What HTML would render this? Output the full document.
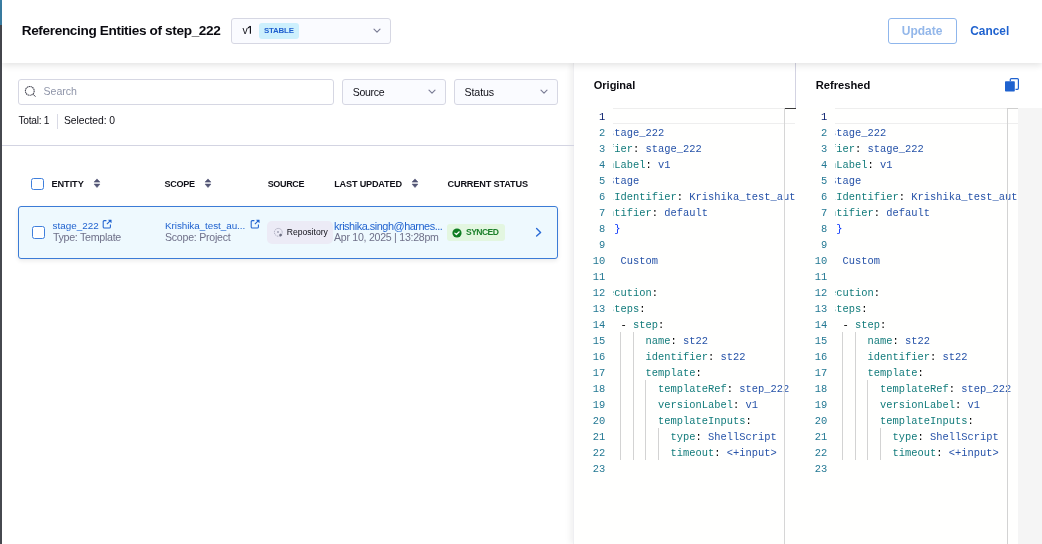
<!DOCTYPE html>
<html><head><meta charset="utf-8">
<style>
*{box-sizing:border-box;margin:0;padding:0}
html,body{width:1042px;height:544px;overflow:hidden;background:#fff}
body{position:relative;font-family:"Liberation Sans",sans-serif;color:#22222a}
.a{position:absolute;white-space:nowrap}
#root{position:absolute;left:0;top:0;width:1042px;height:544px;will-change:transform}
.t{line-height:20px;z-index:10}
.dd{border:1px solid #d6d7e3;border-radius:3px;background:#fafbff}
.chev{width:4.5px;height:4.5px;border-right:1px solid #6b6d85;border-bottom:1px solid #6b6d85;transform:rotate(45deg)}
.cb{border:1.3px solid #3f7fdc;border-radius:2.5px;background:#fff}
.ln{font-family:"Liberation Mono",monospace;font-size:10.4167px;line-height:16px;color:#237893;text-align:right;width:28px}
.ln.act{color:#0b216f}
.cd{font-family:"Liberation Mono",monospace;font-size:10.4167px;line-height:16px;white-space:pre;color:#000}
.k{color:#127b7b}
.v{color:#2652a8}
.p{color:#000}
.b{color:#0431fa}
.h{color:transparent}
</style></head><body><div id="root">
<div class="a" style="left:0;top:0;width:2px;height:544px;background:#46484f"></div>
<div class="a" style="left:0;top:0;width:2px;height:25px;background:#3b80a6"></div>

<!-- right panel -->
<div class="a" style="left:573px;top:63px;width:469px;height:481px;background:#fffffe;box-shadow:-3px 0 6px rgba(0,0,0,0.06);border-left:1px solid #efeff2"></div>
<div class="a" style="left:574px;top:63px;width:468px;height:45px;background:#fff"></div>
<div class="a" style="left:795px;top:63px;width:1px;height:45px;background:#d3d3e2"></div>
<div class="a ln act" style="left:577.3px;top:108.8px">1</div>
<div class="a ln" style="left:577.3px;top:124.8px">2</div>
<div class="a ln" style="left:577.3px;top:140.8px">3</div>
<div class="a ln" style="left:577.3px;top:156.8px">4</div>
<div class="a ln" style="left:577.3px;top:172.8px">5</div>
<div class="a ln" style="left:577.3px;top:188.8px">6</div>
<div class="a ln" style="left:577.3px;top:204.8px">7</div>
<div class="a ln" style="left:577.3px;top:220.8px">8</div>
<div class="a ln" style="left:577.3px;top:236.8px">9</div>
<div class="a ln" style="left:577.3px;top:252.8px">10</div>
<div class="a ln" style="left:577.3px;top:268.8px">11</div>
<div class="a ln" style="left:577.3px;top:284.8px">12</div>
<div class="a ln" style="left:577.3px;top:300.8px">13</div>
<div class="a ln" style="left:577.3px;top:316.8px">14</div>
<div class="a ln" style="left:577.3px;top:332.8px">15</div>
<div class="a ln" style="left:577.3px;top:348.8px">16</div>
<div class="a ln" style="left:577.3px;top:364.8px">17</div>
<div class="a ln" style="left:577.3px;top:380.8px">18</div>
<div class="a ln" style="left:577.3px;top:396.8px">19</div>
<div class="a ln" style="left:577.3px;top:412.8px">20</div>
<div class="a ln" style="left:577.3px;top:428.8px">21</div>
<div class="a ln" style="left:577.3px;top:444.8px">22</div>
<div class="a ln" style="left:577.3px;top:460.8px">23</div>
<div class="a" style="left:613px;top:108px;width:182px;height:436px;overflow:hidden">
<div class="a" style="left:0;top:0;width:182px;height:16px;border-top:1px solid #eeeeee;border-bottom:1px solid #eeeeee"></div>
<div class="a" style="left:7.00px;top:224px;width:1px;height:128px;background:#d3d3d3"></div>
<div class="a" style="left:20.00px;top:224px;width:1px;height:128px;background:#d3d3d3"></div>
<div class="a" style="left:32.00px;top:272px;width:1px;height:80px;background:#d3d3d3"></div>
<div class="a" style="left:45.00px;top:320px;width:1px;height:32px;background:#d3d3d3"></div>
<div class="a cd" style="left:-54.90px;top:16.8px">  <span class="k">name</span><span class="p">:</span> <span class="v">stage_222</span></div>
<div class="a cd" style="left:-54.90px;top:32.8px">  <span class="k">identifier</span><span class="p">:</span> <span class="v">stage_222</span></div>
<div class="a cd" style="left:-54.90px;top:48.8px">  <span class="k">versionLabel</span><span class="p">:</span> <span class="v">v1</span></div>
<div class="a cd" style="left:-54.90px;top:64.8px">  <span class="k">type</span><span class="p">:</span> <span class="v">Stage</span></div>
<div class="a cd" style="left:-54.90px;top:80.8px">  <span class="k">projectIdentifier</span><span class="p">:</span> <span class="v">Krishika_test_autocreation</span></div>
<div class="a cd" style="left:-54.90px;top:96.8px">  <span class="k">orgIdentifier</span><span class="p">:</span> <span class="v">default</span></div>
<div class="a cd" style="left:-54.90px;top:112.8px">  <span class="k">tags</span><span class="p">:</span> <span class="h">{</span><span class="b">}</span></div>
<div class="a cd" style="left:-54.90px;top:128.8px">  <span class="k">spec</span><span class="p">:</span></div>
<div class="a cd" style="left:-54.90px;top:144.8px">    <span class="k">type</span><span class="p">:</span> <span class="v">Custom</span></div>
<div class="a cd" style="left:-54.90px;top:160.8px">    <span class="k">spec</span><span class="p">:</span></div>
<div class="a cd" style="left:-54.90px;top:176.8px">      <span class="k">execution</span><span class="p">:</span></div>
<div class="a cd" style="left:-54.90px;top:192.8px">        <span class="k">steps</span><span class="p">:</span></div>
<div class="a cd" style="left:-54.90px;top:208.8px">          <span class="p">-</span> <span class="k">step</span><span class="p">:</span></div>
<div class="a cd" style="left:-54.90px;top:224.8px">              <span class="k">name</span><span class="p">:</span> <span class="v">st22</span></div>
<div class="a cd" style="left:-54.90px;top:240.8px">              <span class="k">identifier</span><span class="p">:</span> <span class="v">st22</span></div>
<div class="a cd" style="left:-54.90px;top:256.8px">              <span class="k">template</span><span class="p">:</span></div>
<div class="a cd" style="left:-54.90px;top:272.8px">                <span class="k">templateRef</span><span class="p">:</span> <span class="v">step_222</span></div>
<div class="a cd" style="left:-54.90px;top:288.8px">                <span class="k">versionLabel</span><span class="p">:</span> <span class="v">v1</span></div>
<div class="a cd" style="left:-54.90px;top:304.8px">                <span class="k">templateInputs</span><span class="p">:</span></div>
<div class="a cd" style="left:-54.90px;top:320.8px">                  <span class="k">type</span><span class="p">:</span> <span class="v">ShellScript</span></div>
<div class="a cd" style="left:-54.90px;top:336.8px">                  <span class="k">timeout</span><span class="p">:</span> <span class="v">&lt;+input&gt;</span></div>
</div>
<div class="a ln act" style="left:799.3px;top:108.8px">1</div>
<div class="a ln" style="left:799.3px;top:124.8px">2</div>
<div class="a ln" style="left:799.3px;top:140.8px">3</div>
<div class="a ln" style="left:799.3px;top:156.8px">4</div>
<div class="a ln" style="left:799.3px;top:172.8px">5</div>
<div class="a ln" style="left:799.3px;top:188.8px">6</div>
<div class="a ln" style="left:799.3px;top:204.8px">7</div>
<div class="a ln" style="left:799.3px;top:220.8px">8</div>
<div class="a ln" style="left:799.3px;top:236.8px">9</div>
<div class="a ln" style="left:799.3px;top:252.8px">10</div>
<div class="a ln" style="left:799.3px;top:268.8px">11</div>
<div class="a ln" style="left:799.3px;top:284.8px">12</div>
<div class="a ln" style="left:799.3px;top:300.8px">13</div>
<div class="a ln" style="left:799.3px;top:316.8px">14</div>
<div class="a ln" style="left:799.3px;top:332.8px">15</div>
<div class="a ln" style="left:799.3px;top:348.8px">16</div>
<div class="a ln" style="left:799.3px;top:364.8px">17</div>
<div class="a ln" style="left:799.3px;top:380.8px">18</div>
<div class="a ln" style="left:799.3px;top:396.8px">19</div>
<div class="a ln" style="left:799.3px;top:412.8px">20</div>
<div class="a ln" style="left:799.3px;top:428.8px">21</div>
<div class="a ln" style="left:799.3px;top:444.8px">22</div>
<div class="a ln" style="left:799.3px;top:460.8px">23</div>
<div class="a" style="left:835px;top:108px;width:183px;height:436px;overflow:hidden">
<div class="a" style="left:0;top:0;width:183px;height:16px;border-top:1px solid #eeeeee;border-bottom:1px solid #eeeeee"></div>
<div class="a" style="left:7.00px;top:224px;width:1px;height:128px;background:#d3d3d3"></div>
<div class="a" style="left:20.00px;top:224px;width:1px;height:128px;background:#d3d3d3"></div>
<div class="a" style="left:32.00px;top:272px;width:1px;height:80px;background:#d3d3d3"></div>
<div class="a" style="left:45.00px;top:320px;width:1px;height:32px;background:#d3d3d3"></div>
<div class="a cd" style="left:-54.90px;top:16.8px">  <span class="k">name</span><span class="p">:</span> <span class="v">stage_222</span></div>
<div class="a cd" style="left:-54.90px;top:32.8px">  <span class="k">identifier</span><span class="p">:</span> <span class="v">stage_222</span></div>
<div class="a cd" style="left:-54.90px;top:48.8px">  <span class="k">versionLabel</span><span class="p">:</span> <span class="v">v1</span></div>
<div class="a cd" style="left:-54.90px;top:64.8px">  <span class="k">type</span><span class="p">:</span> <span class="v">Stage</span></div>
<div class="a cd" style="left:-54.90px;top:80.8px">  <span class="k">projectIdentifier</span><span class="p">:</span> <span class="v">Krishika_test_autocreation</span></div>
<div class="a cd" style="left:-54.90px;top:96.8px">  <span class="k">orgIdentifier</span><span class="p">:</span> <span class="v">default</span></div>
<div class="a cd" style="left:-54.90px;top:112.8px">  <span class="k">tags</span><span class="p">:</span> <span class="h">{</span><span class="b">}</span></div>
<div class="a cd" style="left:-54.90px;top:128.8px">  <span class="k">spec</span><span class="p">:</span></div>
<div class="a cd" style="left:-54.90px;top:144.8px">    <span class="k">type</span><span class="p">:</span> <span class="v">Custom</span></div>
<div class="a cd" style="left:-54.90px;top:160.8px">    <span class="k">spec</span><span class="p">:</span></div>
<div class="a cd" style="left:-54.90px;top:176.8px">      <span class="k">execution</span><span class="p">:</span></div>
<div class="a cd" style="left:-54.90px;top:192.8px">        <span class="k">steps</span><span class="p">:</span></div>
<div class="a cd" style="left:-54.90px;top:208.8px">          <span class="p">-</span> <span class="k">step</span><span class="p">:</span></div>
<div class="a cd" style="left:-54.90px;top:224.8px">              <span class="k">name</span><span class="p">:</span> <span class="v">st22</span></div>
<div class="a cd" style="left:-54.90px;top:240.8px">              <span class="k">identifier</span><span class="p">:</span> <span class="v">st22</span></div>
<div class="a cd" style="left:-54.90px;top:256.8px">              <span class="k">template</span><span class="p">:</span></div>
<div class="a cd" style="left:-54.90px;top:272.8px">                <span class="k">templateRef</span><span class="p">:</span> <span class="v">step_222</span></div>
<div class="a cd" style="left:-54.90px;top:288.8px">                <span class="k">versionLabel</span><span class="p">:</span> <span class="v">v1</span></div>
<div class="a cd" style="left:-54.90px;top:304.8px">                <span class="k">templateInputs</span><span class="p">:</span></div>
<div class="a cd" style="left:-54.90px;top:320.8px">                  <span class="k">type</span><span class="p">:</span> <span class="v">ShellScript</span></div>
<div class="a cd" style="left:-54.90px;top:336.8px">                  <span class="k">timeout</span><span class="p">:</span> <span class="v">&lt;+input&gt;</span></div>
</div>
<div class="a" style="left:785px;top:108px;width:11px;height:1px;background:#3a3a3a"></div>
<div class="a" style="left:784px;top:108px;width:1px;height:436px;background:#d6d6d6"></div>
<div class="a" style="left:1007px;top:108px;width:1px;height:436px;background:#d3d3d3"></div>
<div class="a" style="left:1007px;top:108px;width:11px;height:1px;background:#cfcfcf"></div>
<div class="a" style="left:1018px;top:108px;width:24px;height:436px;background:#f5f5f5"></div>

<!-- header -->
<div class="a" style="left:2px;top:0;width:1040px;height:63px;background:#fff;z-index:5;box-shadow:0 2px 7px rgba(0,0,0,0.12)"></div>
<div class="a dd" style="left:231px;top:18px;width:160px;height:26px;z-index:6"></div>
<div class="a" style="left:259px;top:23px;width:40px;height:16px;background:#cdf0fd;border-radius:3px;z-index:7"></div>
<svg class="a" style="left:372.8px;top:28px;z-index:7" width="8" height="6" viewBox="0 0 8 6"><polyline points="1,1.2 4,4.2 7,1.2" fill="none" stroke="#7b7d96" stroke-width="1.2" stroke-linecap="round" stroke-linejoin="round"/></svg>
<div class="a" style="left:888px;top:18px;width:69px;height:26px;border:1px solid #8fb6ec;border-radius:3px;z-index:7"></div>

<!-- left panel -->
<div class="a dd" style="left:18px;top:79px;width:316px;height:26px;background:#fff"></div>
<svg class="a" style="left:24px;top:85px" width="13" height="13" viewBox="0 0 13 13"><circle cx="5.8" cy="5.9" r="4.4" fill="none" stroke="#4a4b57" stroke-width="1.1" stroke-dasharray="1.4 0.5"/><line x1="9" y1="9.2" x2="11.5" y2="11.7" stroke="#4a4b57" stroke-width="1"/></svg>
<div class="a dd" style="left:342px;top:79px;width:104px;height:26px"></div>
<svg class="a" style="left:428px;top:89px;" width="8" height="6" viewBox="0 0 8 6"><polyline points="1,1.2 4,4.2 7,1.2" fill="none" stroke="#7b7d96" stroke-width="1.2" stroke-linecap="round" stroke-linejoin="round"/></svg>
<div class="a dd" style="left:454px;top:79px;width:104px;height:26px"></div>
<svg class="a" style="left:540px;top:89px;" width="8" height="6" viewBox="0 0 8 6"><polyline points="1,1.2 4,4.2 7,1.2" fill="none" stroke="#7b7d96" stroke-width="1.2" stroke-linecap="round" stroke-linejoin="round"/></svg>

<div class="a" style="left:57px;top:114px;width:1px;height:15px;background:#d9dae5"></div>
<div class="a" style="left:2px;top:145px;width:572px;height:1px;background:#d3d4e2"></div>

<div class="a cb" style="left:31px;top:178px;width:13px;height:12px"></div>

<div class="a" style="left:18px;top:206px;width:540px;height:53px;border:1px solid #3b7bd6;border-radius:3px;background:#eef9fe;box-shadow:0 2px 4px rgba(0,0,0,0.08)"></div>
<div class="a cb" style="left:32px;top:226px;width:13px;height:13px"></div>
<div class="a" style="left:267px;top:221px;width:66px;height:23px;background:#ecebf6;border-radius:5px"></div>
<div class="a" style="left:447px;top:224px;width:58px;height:17px;background:#e3f6e0;border-radius:3px"></div>


<!-- sort icons -->
<svg class="a" style="left:93px;top:178.3px" width="8" height="11" viewBox="0 0 8 11"><path d="M4 0.9 L6.9 4.1 L1.1 4.1 Z M1.1 6.1 L6.9 6.1 L4 9.5 Z" fill="#535575" stroke="#535575" stroke-width="0.6" stroke-linejoin="round"/></svg>
<svg class="a" style="left:204.3px;top:178.3px" width="8" height="11" viewBox="0 0 8 11"><path d="M4 0.9 L6.9 4.1 L1.1 4.1 Z M1.1 6.1 L6.9 6.1 L4 9.5 Z" fill="#535575" stroke="#535575" stroke-width="0.6" stroke-linejoin="round"/></svg>
<svg class="a" style="left:411.3px;top:178.3px" width="8" height="11" viewBox="0 0 8 11"><path d="M4 0.9 L6.9 4.1 L1.1 4.1 Z M1.1 6.1 L6.9 6.1 L4 9.5 Z" fill="#535575" stroke="#535575" stroke-width="0.6" stroke-linejoin="round"/></svg>
<!-- external link icons -->
<svg class="a" style="left:102.1px;top:219px" width="10" height="10" viewBox="0 0 10 10"><path d="M4.4 1.6 H2.3 Q1.2 1.6 1.2 2.7 V7.9 Q1.2 9 2.3 9 H7.3 Q8.4 9 8.4 7.9 V5.6" fill="none" stroke="#1f62cf" stroke-width="1.05"/><line x1="4.9" y1="5.2" x2="8.4" y2="1.7" stroke="#1f62cf" stroke-width="1.05"/><path d="M6.4 0.9 H9.3 V3.8 Z" fill="#1f62cf" stroke="#1f62cf" stroke-width="0.4" stroke-linejoin="round"/></svg>
<svg class="a" style="left:250.3px;top:219px" width="10" height="10" viewBox="0 0 10 10"><path d="M4.4 1.6 H2.3 Q1.2 1.6 1.2 2.7 V7.9 Q1.2 9 2.3 9 H7.3 Q8.4 9 8.4 7.9 V5.6" fill="none" stroke="#1f62cf" stroke-width="1.05"/><line x1="4.9" y1="5.2" x2="8.4" y2="1.7" stroke="#1f62cf" stroke-width="1.05"/><path d="M6.4 0.9 H9.3 V3.8 Z" fill="#1f62cf" stroke="#1f62cf" stroke-width="0.4" stroke-linejoin="round"/></svg>
<!-- repo icon -->
<svg class="a" style="left:273px;top:227px" width="11" height="11" viewBox="0 0 11 11"><circle cx="5.3" cy="5.3" r="3.9" fill="none" stroke="#a2a2b4" stroke-width="0.9" stroke-dasharray="1.3 0.7"/><circle cx="5" cy="5" r="1" fill="#a2a2b4"/><path d="M7.6 6.4 L9.3 8.1 L7.6 9.8 L5.9 8.1 Z" fill="#6e6f82"/></svg>
<!-- synced check -->
<svg class="a" style="left:452.1px;top:227.7px" width="10" height="10" viewBox="0 0 10 10"><circle cx="5" cy="5" r="4.6" fill="#0f7d22"/><polyline points="2.8,5.1 4.4,6.5 7.2,3.8" fill="none" stroke="#fff" stroke-width="1.2" stroke-linecap="round" stroke-linejoin="round"/></svg>
<!-- row chevron -->
<svg class="a" style="left:535px;top:227px" width="8" height="11" viewBox="0 0 8 11"><polyline points="1.6,1.6 5.6,5.4 1.6,9.1" fill="none" stroke="#2a6bd6" stroke-width="1.4" stroke-linecap="round" stroke-linejoin="round"/></svg>
<!-- copy icon -->
<svg class="a" style="left:1004px;top:77px;z-index:3" width="16" height="16" viewBox="0 0 16 16"><path d="M6.3 4.2 V2.6 Q6.3 1.6 7.3 1.6 H13.4 Q14.4 1.6 14.4 2.6 V11.3 Q14.4 12.3 13.4 12.3 H11.5" fill="none" stroke="#1f62cf" stroke-width="1.2"/><rect x="1" y="4.3" width="9.8" height="10.3" rx="0.8" fill="#1f62cf"/></svg>
<svg class="a" style="left:246px;top:25px;z-index:10" width="7" height="10" viewBox="0 0 7 10"><path d="M4.4 1.1 V8.8 M4.4 1.2 L1.9 2.9" fill="none" stroke="#101018" stroke-width="1.15" stroke-linecap="butt" stroke-linejoin="round"/></svg>
<div class="a t" id="title" style="left:21.70px;top:20.89px;font-size:13.60px;font-weight:bold;letter-spacing:-0.35px;color:#0a0a10">Referencing Entities of step_222</div>
<div class="a t" id="v1" style="left:242.40px;top:20.16px;font-size:10.50px;color:#101018">v</div>
<div class="a t" id="stable" style="left:264.00px;top:21.16px;font-size:7.90px;font-weight:bold;letter-spacing:-0.20px;color:#1f5fcf">STABLE</div>
<div class="a t" id="update" style="left:901.80px;top:21.04px;font-size:12.01px;font-weight:bold;color:#93b7ea">Update</div>
<div class="a t" id="cancel" style="left:970.30px;top:21.09px;font-size:11.86px;font-weight:bold;color:#1f62cf">Cancel</div>
<div class="a t" id="search" style="left:43.60px;top:81.43px;font-size:10.59px;letter-spacing:-0.07px;color:#8f95a9">Search</div>
<div class="a t" id="source" style="left:352.70px;top:82.44px;font-size:10.56px;letter-spacing:-0.28px;color:#101018">Source</div>
<div class="a t" id="status" style="left:464.60px;top:82.39px;font-size:10.70px;letter-spacing:-0.17px;color:#101018">Status</div>
<div class="a t" id="total" style="left:18.50px;top:111.47px;font-size:10.20px;letter-spacing:-0.27px;color:#101018">Total: 1</div>
<div class="a t" id="selected" style="left:64.00px;top:110.67px;font-size:10.34px;letter-spacing:-0.07px;color:#101018">Selected: 0</div>
<div class="a t" id="entity" style="left:51.50px;top:174.10px;font-size:9.24px;font-weight:bold;letter-spacing:-0.11px;color:#101018">ENTITY</div>
<div class="a t" id="scope" style="left:164.50px;top:174.16px;font-size:9.07px;font-weight:bold;letter-spacing:-0.29px;color:#101018">SCOPE</div>
<div class="a t" id="sourceh" style="left:267.70px;top:174.18px;font-size:9.00px;font-weight:bold;letter-spacing:-0.34px;color:#101018">SOURCE</div>
<div class="a t" id="lastup" style="left:334.20px;top:174.13px;font-size:9.14px;font-weight:bold;letter-spacing:-0.18px;color:#101018">LAST UPDATED</div>
<div class="a t" id="curstat" style="left:447.50px;top:174.12px;font-size:9.17px;font-weight:bold;letter-spacing:-0.16px;color:#101018">CURRENT STATUS</div>
<div class="a t" id="stage" style="left:52.60px;top:215.77px;font-size:9.89px;color:#1f62cf">stage_222</div>
<div class="a t" id="type" style="left:52.90px;top:227.49px;font-size:10.70px;letter-spacing:-0.30px;color:#6f7089">Type: Template</div>
<div class="a t" id="krish" style="left:165.00px;top:215.88px;font-size:9.87px;letter-spacing:-0.05px;color:#1f62cf">Krishika_test_au...</div>
<div class="a t" id="scopep" style="left:165.00px;top:227.38px;font-size:10.58px;letter-spacing:-0.24px;color:#6f7089">Scope: Project</div>
<div class="a t" id="repo" style="left:286.70px;top:222.21px;font-size:8.62px;color:#101018">Repository</div>
<div class="a t" id="email" style="left:334.00px;top:215.82px;font-size:10.90px;letter-spacing:-0.46px;color:#1f62cf">krishika.singh@harnes...</div>
<div class="a t" id="date" style="left:334.00px;top:226.93px;font-size:10.60px;letter-spacing:-0.27px;color:#6f7089">Apr 10, 2025 | 13:28pm</div>
<div class="a t" id="synced" style="left:466.00px;top:222.02px;font-size:8.60px;font-weight:bold;letter-spacing:-0.59px;color:#1b7f2a">SYNCED</div>
<div class="a t" id="orig" style="left:593.80px;top:74.97px;font-size:11.06px;font-weight:bold;letter-spacing:-0.04px;color:#0a0a10">Original</div>
<div class="a t" id="refr" style="left:815.70px;top:74.93px;font-size:11.17px;font-weight:bold;color:#0a0a10">Refreshed</div>

</div></body></html>
